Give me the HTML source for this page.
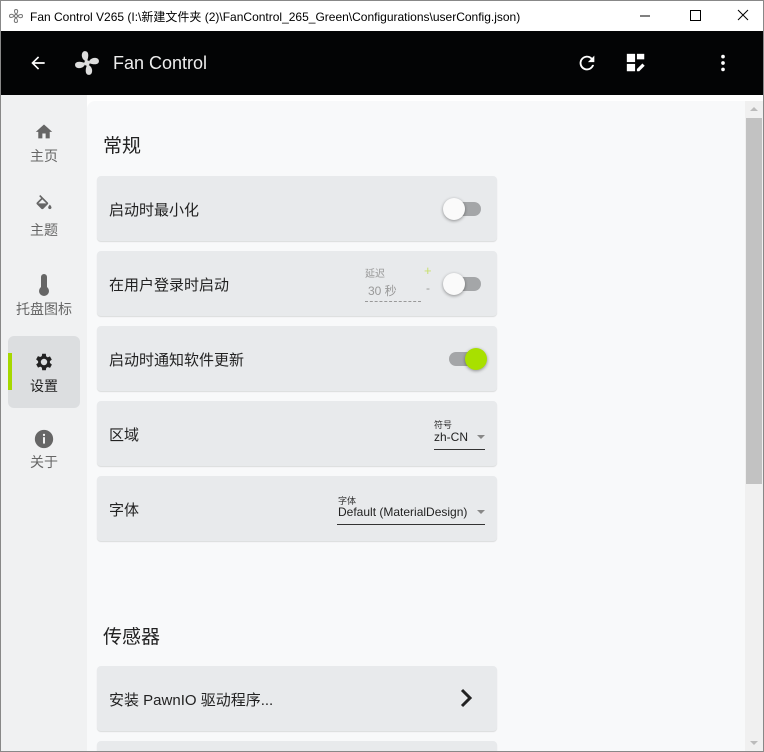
<!DOCTYPE html>
<html><head><meta charset="utf-8"><style>
*{margin:0;padding:0;box-sizing:border-box}
html,body{width:764px;height:752px;overflow:hidden}
body{font-family:"Liberation Sans","Noto Sans CJK SC",sans-serif;background:#fff;position:relative}
.frame{position:absolute;left:0;top:0;width:764px;height:752px;border:1px solid #888;pointer-events:none;z-index:9}
.title{position:absolute;left:0;top:0;width:764px;height:31px;background:#fff;font-size:12px;color:#000}
.title span{position:absolute;left:30px;top:8px}
.bar{position:absolute;left:0;top:31px;width:764px;height:64px;background:#030405;color:#fff}
.side{position:absolute;left:0;top:95px;width:87px;height:657px;background:#f0f1f2}
.nav{position:absolute;left:8px;width:72px;height:72px;text-align:center;font-size:14px;color:#666}
.nav .t{position:absolute;left:0;right:0;top:43px}
.main{position:absolute;left:87px;top:101px;width:658px;height:651px;background:#f8f9fa;border-radius:8px 0 0 0;overflow:hidden}
.card{position:absolute;left:10px;width:400px;height:65px;background:#e8eaec;border-radius:4px;box-shadow:0 1px 1px rgba(0,0,0,.12);font-size:15px;color:#222}
.card .l{position:absolute;left:12px;top:23px}
.h{position:absolute;left:16px;font-size:19px;color:#222}
.sw{position:absolute;width:34px;height:14px;border-radius:7px;background:#a4a6a8}
.knob{position:absolute;width:22px;height:22px;border-radius:50%;top:-4px;box-shadow:0 1px 3px rgba(0,0,0,.4)}
.sb{position:absolute;left:745px;top:101px;width:18px;height:650px;background:#f0f0f0}
</style></head><body>
<div class="frame"></div>
<div class="title">
<svg style="position:absolute;left:8px;top:8px" width="16" height="16" viewBox="0 0 16 16"><g fill="none" stroke="#777"><circle cx="8" cy="8" r="1.5"/><path d="M8 6.5C6 4 6 1.5 8 1.5S10.5 4 8 6.5M9.5 8C12 6 14.5 6 14.5 8S12 10.5 9.5 8M8 9.5C10 12 10 14.5 8 14.5S5.5 12 8 9.5M6.5 8C4 10 1.5 10 1.5 8S4 5.5 6.5 8"/></g></svg>
<span>Fan Control V265 (I:\新建文件夹 (2)\FanControl_265_Green\Configurations\userConfig.json)</span>
<svg style="position:absolute;left:640px;top:8px" width="120" height="16"><path d="M0 8h10" stroke="#000"/><rect x="50.5" y="2.5" width="10" height="10" fill="none" stroke="#000"/><path d="M98 2l10 10M108 2l-10 10" stroke="#000"/></svg>
</div>
<div class="bar">
<svg style="position:absolute;left:28px;top:22px" width="20" height="20" viewBox="0 0 24 24"><path d="M20 11H7.8l5.6-5.6L12 4l-8 8 8 8 1.4-1.4L7.8 13H20z" fill="#fff"/></svg>
<svg style="position:absolute;left:72px;top:17px" width="30" height="30" viewBox="0 0 24 24" fill="#ddd"><circle cx="12" cy="12" r="2.2"/><path d="M11 10.5C7 9 7 3 10 2.5c3-.5 4 3 2 8zM13.5 11C15 7 21 7 21.5 10c.5 3-3 4-8 2zM13 13.5c4 1.5 4 7.5 1 8-3 .5-4-3-2-8zM10.5 13C9 17 3 17 2.5 14c-.5-3 3-4 8-2z"/></svg>
<div style="position:absolute;left:113px;top:22px;font-size:18px;color:#eee">Fan Control</div>
<svg style="position:absolute;left:576px;top:21px" width="22" height="22" viewBox="0 0 24 24"><path d="M17.6 6.4A8 8 0 1 0 19.7 14h-2.1A6 6 0 1 1 12 6c1.7 0 3.1.7 4.2 1.8L13 11h7V4z" fill="#fff"/></svg>
<svg style="position:absolute;left:625px;top:21px" width="22" height="22" viewBox="0 0 24 24" fill="#fff"><rect x="2" y="2" width="9" height="9"/><rect x="13" y="2" width="8" height="6"/><rect x="2" y="13" width="9" height="8"/><path d="M13 21v-2.5l6-6 2.5 2.5-6 6z"/></svg>
<svg style="position:absolute;left:712px;top:21px" width="22" height="22" viewBox="0 0 24 24" fill="#fff"><circle cx="12" cy="5" r="2"/><circle cx="12" cy="12" r="2"/><circle cx="12" cy="19" r="2"/></svg>
</div>
<div class="side">
<div class="nav" style="top:24px"><svg style="position:absolute;left:26px;top:3px" width="20" height="18" viewBox="0 0 24 22"><path d="M10 20v-6h4v6h5v-8h3L12 3 2 12h3v8z" fill="#666"/></svg><div class="t" style="top:27px">主页</div></div>
<div class="nav" style="top:98px"><svg style="position:absolute;left:26px;top:2px" width="20" height="20" viewBox="0 0 24 24"><path d="M16.6 9 7.6 0 6.2 1.4l2.4 2.4-5.2 5.2c-.6.6-.6 1.5 0 2.1l5.5 5.5c.3.3.7.4 1.1.4s.8-.1 1.1-.4l5.5-5.5c.6-.6.6-1.5 0-2.1zM5.2 10 10 5.2l4.8 4.8zM19 11.5s-2 2.2-2 3.5c0 1.1.9 2 2 2s2-.9 2-2c0-1.3-2-3.5-2-3.5z" fill="#666"/></svg><div class="t" style="top:27px">主题</div></div>
<div class="nav" style="top:176px;left:0;width:88px"><svg style="position:absolute;left:36px;top:2px" width="16" height="24" viewBox="0 0 16 24"><rect x="5" y="1" width="6" height="16" rx="3" fill="#666"/><circle cx="8" cy="18" r="5" fill="#666"/></svg><div class="t" style="top:28px">托盘图标</div></div>
<div class="nav" style="top:241px;background:#dcdee0;border-radius:6px"><div style="position:absolute;left:0;top:17px;width:4px;height:37px;background:#a6d800"></div><svg style="position:absolute;left:25px;top:15px" width="22" height="22" viewBox="0 0 24 24"><path d="M19.4 13a7.8 7.8 0 0 0 0-2l2.1-1.6-2-3.5-2.5 1a7.3 7.3 0 0 0-1.7-1L15 3h-4l-.4 2.6a7.3 7.3 0 0 0-1.7 1l-2.5-1-2 3.5L6.6 11a7.8 7.8 0 0 0 0 2l-2.1 1.6 2 3.5 2.5-1c.5.4 1.1.7 1.7 1L11 21h4l.4-2.6c.6-.3 1.2-.6 1.7-1l2.5 1 2-3.5zM13 15.5a3.5 3.5 0 1 1 0-7 3.5 3.5 0 0 1 0 7z" fill="#222" transform="translate(-1 0)"/></svg><div class="t" style="top:40px;color:#222">设置</div></div>
<div class="nav" style="top:330px"><svg style="position:absolute;left:25px;top:3px" width="22" height="22" viewBox="0 0 24 24"><circle cx="12" cy="12" r="10" fill="#666"/><rect x="11" y="10" width="2" height="7" fill="#fff"/><circle cx="12" cy="7.5" r="1.2" fill="#fff"/></svg><div class="t" style="top:27px">关于</div></div>
</div>
<div class="main">
<div class="h" style="top:30px">常规</div>
<div class="card" style="top:75px"><div class="l">启动时最小化</div><div class="sw" style="left:350px;top:26px;"><div class="knob" style="left:-4px;background:#fafafa"></div></div></div>
<div class="card" style="top:150px"><div class="l">在用户登录时启动</div>
<div style="position:absolute;left:268px;top:14px;font-size:10px;color:#999">延迟</div>
<div style="position:absolute;left:271px;top:31px;font-size:12px;color:#999">30 秒</div>
<div style="position:absolute;left:268px;top:50px;width:56px;border-top:1px dashed #999"></div>
<div style="position:absolute;left:327px;top:12px;font-size:13px;color:#c8e070">+</div>
<div style="position:absolute;left:329px;top:30px;font-size:12px;color:#999">-</div>
<div class="sw" style="left:350px;top:26px;"><div class="knob" style="left:-4px;background:#fafafa"></div></div></div>
<div class="card" style="top:225px"><div class="l">启动时通知软件更新</div><div class="sw" style="left:352px;top:26px;"><div class="knob" style="left:16px;background:#a8e000"></div></div></div>
<div class="card" style="top:300px"><div class="l">区域</div>
<div style="position:absolute;left:337px;top:17px;font-size:9px;color:#333">符号</div>
<div style="position:absolute;left:337px;top:29px;font-size:12px;color:#222">zh-CN</div>
<div style="position:absolute;left:380px;top:34px;border:4px solid transparent;border-top:4px solid #888"></div>
<div style="position:absolute;left:337px;top:48px;width:51px;border-top:1px solid #333"></div></div>
<div class="card" style="top:375px"><div class="l">字体</div>
<div style="position:absolute;left:241px;top:18px;font-size:9px;color:#333">字体</div>
<div style="position:absolute;left:241px;top:29px;font-size:12px;color:#222">Default (MaterialDesign)</div>
<div style="position:absolute;left:380px;top:34px;border:4px solid transparent;border-top:4px solid #888"></div>
<div style="position:absolute;left:240px;top:48px;width:148px;border-top:1px solid #333"></div></div>
<div class="h" style="top:521px">传感器</div>
<div class="card" style="top:565px"><div class="l">安装 PawnIO 驱动程序...</div><svg style="position:absolute;left:360px;top:20px" width="20" height="24" viewBox="0 0 20 24"><path d="M5 4l8 8-8 8" stroke="#222" stroke-width="3" fill="none"/></svg></div>
<div class="card" style="top:640px"></div>
</div>
<div class="sb"><div style="position:absolute;left:1px;top:17px;width:16px;height:366px;background:#c2c2c2"></div>
<div style="position:absolute;left:5px;top:6px;border:4px solid transparent;border-bottom:4px solid #bbb;border-top:0"></div>
<div style="position:absolute;left:5px;top:640px;border:4px solid transparent;border-top:4px solid #bbb;border-bottom:0"></div></div>
</body></html>
